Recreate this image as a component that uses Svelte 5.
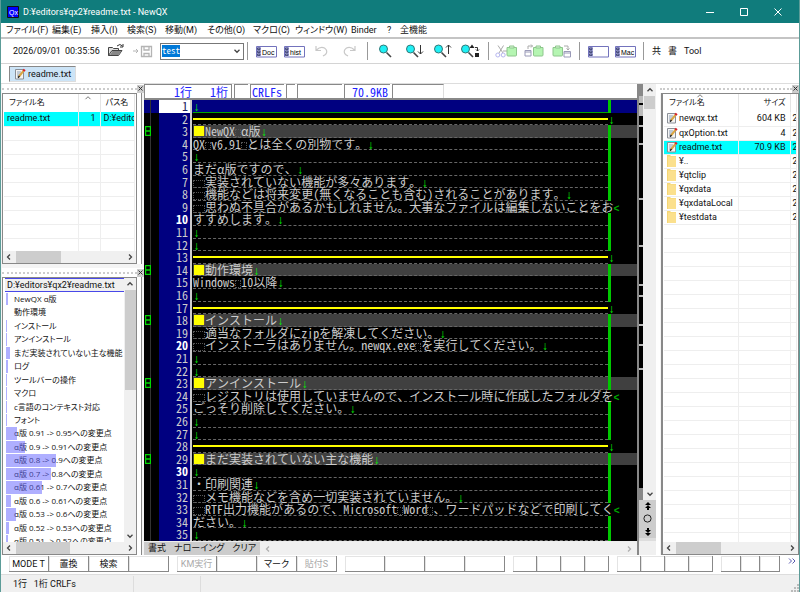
<script lang="ts">
  type Line = { text?: string; kind?: "cursor" | "rule" | "head"; wrap?: boolean };

  const menus = ["ファイル(F)", "編集(E)", "挿入(I)", "検索(S)", "移動(M)", "その他(O)", "マクロ(C)", "ウィンドウ(W)", "Binder", "?", "全機能"];

  const lines: Line[] = [
    { kind: "cursor" },
    { kind: "rule" },
    { kind: "head", text: "NewQX α版" },
    { text: "QX v6.91 とは全くの別物です。" },
    {},
    { text: "まだα版ですので、" },
    { text: "　実装されていない機能が多々あります。" },
    { text: "　機能などは将来変更(無くなることも含む)されることがあります。" },
    { text: "　思わぬ不具合があるかもしれません。大事なファイルは編集しないことをお", wrap: true },
    { text: "すすめします。" },
    {},
    {},
    { kind: "rule" },
    { kind: "head", text: "動作環境" },
    { text: "Windows 10以降" },
    {},
    { kind: "rule" },
    { kind: "head", text: "インストール" },
    { text: "　適当なフォルダにzipを解凍してください。" },
    { text: "　インストーラはありません。newqx.exe を実行してください。" },
    {},
    {},
    { kind: "head", text: "アンインストール" },
    { text: "　レジストリは使用していませんので、インストール時に作成したフォルダを", wrap: true },
    { text: "ごっそり削除してください。" },
    {},
    {},
    { kind: "rule" },
    { kind: "head", text: "まだ実装されていない主な機能" },
    {},
    { text: "・印刷関連" },
    { text: "　メモ機能などを含め一切実装されていません。" },
    { text: "　RTF出力機能があるので、Microsoft Word 、ワードパッドなどで印刷してく", wrap: true },
    { text: "ださい。" },
    {},
  ];

  // title, length bar in px
  const outline: [string, number][] = [
    ["NewQX α版", 2], ["動作環境", 0], ["インストール", 1], ["アンインストール", 1],
    ["まだ実装されていない主な機能", 4], ["ログ", 2], ["ツールバーの操作", 1], ["マクロ", 1],
    ["c言語のコンテキスト対応", 1], ["フォント", 1],
    ["α版 0.91 -> 0.95への変更点", 11], ["α版 0.9 -> 0.91への変更点", 19],
    ["α版 0.8 -> 0.9への変更点", 50], ["α版 0.7 -> 0.8への変更点", 45],
    ["α版 0.61 -> 0.7への変更点", 36], ["α版 0.6 -> 0.61への変更点", 5],
    ["α版 0.53 -> 0.6への変更点", 10], ["α版 0.52 -> 0.53への変更点", 3],
    ["α版 0.51 -> 0.52への変更点", 2],
  ];

  // distance from each overview mark to the one above
  const marks = [9, 16, 53, 45, 37, 9, 27, 18, 22];

  const files = [
    { name: "newqx.txt", size: "604 KB" },
    { name: "qxOption.txt", size: "4" },
    { name: "readme.txt", size: "70.9 KB", current: true },
    { name: "¥..", dir: true },
    { name: "¥qtclip", dir: true },
    { name: "¥qxdata", dir: true },
    { name: "¥qxdataLocal", dir: true },
    { name: "¥testdata", dir: true },
  ];

  const keys = [
    { size: "wide", labels: ["MODE T", "置換", "検索", ""] },
    { size: "wide", labels: ["KM実行", "", "マーク", "貼付S"] },
    { size: "wide", labels: ["", "", "", ""] },
    { size: "slim", labels: ["", "", "", ""] },
    { size: "slim", labels: ["", "", "", ""] },
    { size: "slim", labels: ["", "", ""] },
  ];
  const disabled = ["KM実行", "貼付S"];

  let search = $state("test");
</script>

{#snippet chevron(dir: string, dim = false)}
  <svg class="chev" class:dim viewBox="0 0 8 8" width="8" height="8">
    {#if dir === "left"}<path d="M5 1.5 2.5 4 5 6.5" />
    {:else if dir === "right"}<path d="M3 1.5 5.5 4 3 6.5" />
    {:else if dir === "up"}<path d="M1.5 5.2 4 2.7 6.5 5.2" />
    {:else}<path d="M1.5 2.8 4 5.3 6.5 2.8" />{/if}
  </svg>
{/snippet}

{#snippet hscroll(size: string)}
  <div class="hscroll">
    {@render chevron("left")}
    <div class="thumb {size}"></div>
    <span class="grow"></span>
    {@render chevron("right")}
  </div>
{/snippet}

{#snippet grip()}
  <div class="grip"><i></i><button aria-label="閉じる"><svg viewBox="0 0 7 7" width="7" height="7"><path d="M1.5 1.5 5.5 5.5M5.5 1.5 1.5 5.5" stroke="#333" fill="none" /></svg></button></div>
{/snippet}

{#snippet memo()}
  <svg class="memo" viewBox="0 0 12 12" width="12" height="12">
    <path d="M1.5 1.5h8v9.5h-8z" fill="#f4f4f4" stroke="#8a8f96" />
    <path d="M3 4h4M3 6h3M3 8h3" stroke="#8da0b8" />
    <path d="M5 8.5 9.7 2.7" stroke="#d9a441" stroke-width="2" />
    <path d="M4 9.7 5.5 8" stroke="#222" stroke-width="1.4" />
    <path d="M9.4 3.1 10.7 1.5" stroke="#d8202a" stroke-width="2.4" />
  </svg>
{/snippet}

{#snippet labelled(text: string)}
  <svg viewBox="0 0 21 13" width="21" height="13">
    <path d="M.5 1.5h20v10.5H.5z" fill="#fff" stroke="#7373bd" />
    <path d="M1 2h4v9.5H1z" fill="#aaaadf" />
    <path d="M1.5 3h2.5v1.5H1.5zM1.5 6h2.5v1.5H1.5zM1.5 9h2.5v1.5H1.5z" fill="none" stroke="#333a66" stroke-width=".8" />
    <text x="6" y="9.5" font-size="7">{text}</text>
  </svg>
{/snippet}

{#snippet lens(mark: string)}
  <svg viewBox="0 0 21 16" width="21" height="16">
    <path d="M8.5 9.5 13 14" stroke="#444" stroke-width="1.6" />
    <circle cx="5.5" cy="6" r="4" fill="#1ff0f5" stroke="#377" />
    {#if mark === "down"}<path d="M15.5 2v9M13 8.5l2.5 2.5L18 8.5" stroke="#333" fill="none" />
    {:else if mark === "up"}<path d="M15.5 11V2M13 4.5 15.5 2 18 4.5" stroke="#333" fill="none" />
    {:else if mark === "replace"}<path d="M9.5 5h5L12 1.5z" fill="#222" /><path d="M15 4.5h2.5v3.5M16 6.5 17.5 8 19 6.5" stroke="#333" fill="none" /><path d="M15 10h4v4h-4z" fill="#222" />{/if}
  </svg>
{/snippet}

{#snippet board(x: number)}
  <path d="M{x} 3.5h9.5v7.5q0 1-1 1h-7.5q-1 0-1-1z" fill="#b5f5b2" stroke="#8ec68d" />
  <path d="M{x + 2.5} 4v-2h4.5v2z" fill="#d9f7d7" stroke="#8ec68d" />
{/snippet}

<div class="window">
  <header class="title">
    <svg viewBox="0 0 12 12" width="12" height="12">
      <path d="M.5.5h11v11H.5z" fill="#00f" stroke="#111" />
      <text x="2" y="9" font-size="7" fill="#fff">Qx</text>
    </svg>
    <h1>D:¥editors¥qx2¥readme.txt - NewQX</h1>
    <button aria-label="最小化"><svg viewBox="0 0 10 10" width="10" height="10"><path d="M1 5.5h8" /></svg></button>
    <button aria-label="最大化"><svg viewBox="0 0 10 10" width="10" height="10"><path d="M1.5 1.5h7v7h-7z" /></svg></button>
    <button aria-label="閉じる"><svg viewBox="0 0 10 10" width="10" height="10"><path d="M1.5 1.5l7 7M8.5 1.5l-7 7" /></svg></button>
  </header>

  <nav class="menu">
    {#each menus as m}<button>{m}</button>{/each}
  </nav>

  <div class="toolbar">
    <span>2026/09/01</span>
    <span>00:35:56</span>
    <button aria-label="開く">
      <svg viewBox="0 0 18 16" width="18" height="16">
        <path d="M1.5 12.5v-8h4l1 1h5v2M1.5 12.5l3.5-5h10l-3.5 5z" fill="#ddd" stroke="#444" />
        <path d="M3 12l2.5-4h9L11.5 12z" fill="#888" />
        <path d="M10 3q3-3 5.5 0M16 1v3h-3" fill="none" stroke="#333" />
      </svg>
    </button>
    <button aria-label="保存">
      <svg viewBox="0 0 21 16" width="21" height="16" stroke="#b4b4b4" fill="none">
        <path d="M1 8h5M4 6l2 2-2 2" />
        <path d="M9.5 3.5h10v10h-10zM12 3.5v3.5h5V3.5M12 13.5v-3h5v3" stroke-width="1.3" />
      </svg>
    </button>
    <div class="combo">
      <input aria-label="検索文字列" bind:value={search} />
      <span class="grow"></span>
      <button aria-label="履歴">{@render chevron("down")}</button>
    </div>
    <i class="sep"></i>
    <button aria-label="文書">{@render labelled("Doc")}</button>
    <button aria-label="履歴一覧">{@render labelled("hist")}</button>
    <button aria-label="元に戻す"><svg viewBox="0 0 15 14" width="15" height="14" fill="none" stroke="#c8c8c8" stroke-width="1.2"><path d="M2 2v4.5h5M2.5 6q4-4 8-2 4 3 1 6.5L9 12" /></svg></button>
    <button aria-label="やり直し"><svg viewBox="0 0 15 14" width="15" height="14" fill="none" stroke="#c8c8c8" stroke-width="1.2"><path d="M13 2v4.5H8M12.5 6q-4-4-8-2-4 3-1 6.5L6 12" /></svg></button>
    <i class="sep"></i>
    <button aria-label="検索">{@render lens("")}</button>
    <button aria-label="次を検索">{@render lens("down")}</button>
    <button aria-label="前を検索">{@render lens("up")}</button>
    <button aria-label="置換">{@render lens("replace")}</button>
    <i class="sep"></i>
    <button aria-label="切り取り">
      <svg viewBox="0 0 22 15" width="22" height="15" fill="none">
        <path d="M3 1.5 8 9M8.5 1.5 4 9M8 7h4" stroke="#aaa" /><circle cx="2.8" cy="11" r="2" stroke="#b5b5ee" /><circle cx="8.2" cy="11" r="2" stroke="#b5b5ee" />
        {@render board(12)}
      </svg>
    </button>
    <button aria-label="コピー">
      <svg viewBox="0 0 20 15" width="20" height="15" fill="none">
        <path d="M4 5V2h4.5M7 .5 8.5 2 7 3.5" stroke="#aaa" /><path d="M1 6.5h6v5.5H1zM1 8h6" stroke="#9a9ab8" />
        {@render board(9.5)}
      </svg>
    </button>
    <button aria-label="貼り付け">
      <svg viewBox="0 0 20 15" width="20" height="15" fill="none">
        {@render board(1)}
        <path d="M12 2h4v4M14.5 4.5 16 6l1.5-1.5" stroke="#aaa" /><path d="M12 7.5h6.5v5.5H12zM12 9h6.5" stroke="#9a9ab8" fill="#fff" />
      </svg>
    </button>
    <i class="sep"></i>
    <button aria-label="パネル">{@render labelled("")}</button>
    <button aria-label="マクロ">{@render labelled("Mac")}</button>
    <i class="sep"></i>
    <button>共</button>
    <button>書</button>
    <button>Tool</button>
  </div>

  <div class="tabs"><button>{@render memo()}readme.txt</button></div>

  <main>
    <aside class="left">
      {@render grip()}
      <section class="pane open">
        <div class="sheet">
          <table>
            <colgroup><col class="c-name" /><col class="c-num" /><col /></colgroup>
            <thead><tr><th>ファイル名</th><th class="sorted">{@render chevron("up")}</th><th>パス名</th></tr></thead>
            <tbody>
              <tr class="cur"><td>readme.txt</td><td class="num">1</td><td>D:¥edito</td></tr>
              {#each Array(9) as _}<tr><td></td><td></td><td></td></tr>{/each}
            </tbody>
          </table>
        </div>
        {@render hscroll("mid")}
      </section>
      {@render grip()}
      <section class="pane tree">
        <div class="treebody">
          <div class="items">
            <h2>D:¥editors¥qx2¥readme.txt</h2>
            <ul>
              {#each outline as [name, len]}
                <li>{name}<i style="width: {len}px"></i></li>
              {/each}
            </ul>
          </div>
          <div class="vscroll">
            {@render chevron("up")}
            <div class="thumb long"></div>
            <span class="grow"></span>
            {@render chevron("down")}
          </div>
        </div>
        {@render hscroll("big")}
      </section>
    </aside>

    <section class="editor">
      <div class="work">
        <div class="info">
          <span class="pos">&nbsp;1行&nbsp;&nbsp;&nbsp;1桁</span><span class="s1"></span><span class="s2">CRLFs</span><span class="s3"></span><span class="s4"></span><span class="s5">70.9KB</span><span class="s6"></span>
        </div>
        <div class="text">
          {#each lines as line, i}
            <div class="line {line.kind ?? ''}" class:wrap={line.wrap}>
              <span class="fold">{#if line.kind === "head"}<svg viewBox="0 0 6 10" width="6" height="10"><path d="M.5.5h5v9h-5zM.5 5h5" fill="none" stroke="#00d800" stroke-width="1.4" /></svg>{/if}</span>
              <span class="no" class:ten={(i + 1) % 10 === 0}>{i + 1}</span>
              <span class="body">{#if line.kind === "head"}<b>■</b>{/if}{#each line.text ?? "" as ch}{#if ch === " " || ch === "　"}<i class="sp" class:full={ch === "　"}>{ch}</i>{:else}{ch}{/if}{/each}{#if line.wrap}<em class="fold-mark">&lt;</em>{:else if line.kind !== "rule"}<em>↓</em>{/if}</span>
              <span class="edge">{#if line.kind === "rule"}<em>↓</em>{/if}</span>
            </div>
          {/each}
        </div>
        <div class="modes">
          <button>書式</button><button>ナローイング</button><button>クリア</button>
          <div class="track">{@render chevron("left", true)}<span class="grow"></span>{@render chevron("right", true)}</div>
        </div>
      </div>
      <div class="side">
        <div class="bars">
          <div class="map">
            <i class="m0"></i><i class="m1"></i><i class="m2"></i>
            {#each marks as gap}<i style="margin-top: {gap}px"></i>{/each}
            <span class="grow"></span><i class="m0"></i>
          </div>
          <div class="vscroll">
            {@render chevron("up")}
            <div class="thumb short"></div>
            <span class="grow"></span>
            {@render chevron("down")}
          </div>
        </div>
        <div class="jump">
          <button aria-label="前へ"><svg viewBox="0 0 8 8" width="8" height="8"><path d="M4 0 7 3H1zM4 3 7 6H1zM3 6h2v2H3z" /></svg></button>
          <button aria-label="対象"><svg viewBox="0 0 9 9" width="9" height="9"><circle cx="4.5" cy="4.5" r="3.6" fill="none" stroke="#222" /></svg></button>
          <button aria-label="次へ"><svg viewBox="0 0 8 8" width="8" height="8"><path d="M4 8 7 5H1zM4 5 7 2H1zM3 0h2v2H3z" /></svg></button>
        </div>
        <div class="foot"></div>
      </div>
    </section>

    <aside class="right">
      {@render grip()}
      <section class="pane">
        <div class="sheet">
          <table>
            <colgroup><col class="f-name" /><col class="f-size" /><col /></colgroup>
            <thead><tr><th>ファイル名<span class="mark">{@render chevron("up")}</span></th><th class="num">サイズ</th><th></th></tr></thead>
            <tbody>
              {#each files as f}
                <tr class:cur={f.current}>
                  <td class="file">
                    {#if f.dir}<svg viewBox="0 0 12 12" width="12" height="12"><path d="M1 0h3l1 1h5v11H1z" fill="#f5d573" /><path d="M2 1.5h8V12H2z" fill="#fbe08d" /></svg>{:else}{@render memo()}{/if}<span>{f.name}</span>
                  </td>
                  <td class="num">{f.size ?? ""}</td>
                  <td class="date">2</td>
                </tr>
              {/each}
              {#each Array(24) as _}<tr><td></td><td></td><td></td></tr>{/each}
            </tbody>
          </table>
        </div>
        {@render hscroll("mid")}
      </section>
    </aside>
  </main>

  <div class="keys">
    {#each keys as group}
      <div class="group {group.size}">
        {#each group.labels as label}<button disabled={disabled.includes(label)}>{label}</button>{/each}
      </div>
    {/each}
    <button class="more" aria-label="その他"><svg viewBox="0 0 8 6" width="8" height="6"><path d="M1 .5 3.5 3 1 5.5M4.5 .5 7 3 4.5 5.5" fill="none" stroke="#5a5ab0" /></svg></button>
  </div>

  <footer>
    <span class="first">1行&nbsp;&nbsp;&nbsp;1桁 CRLFs</span><span class="second"></span><span class="grow"></span>
    <svg viewBox="0 0 8 8" width="8" height="8"><path d="M6 0h2v2H6zM3 3h2v2H3zM6 3h2v2H6zM0 6h2v2H0zM3 6h2v2H3zM6 6h2v2H6z" fill="#bbb" /></svg>
  </footer>
</div>

<style>
  :global(body) { background: #fff; }
  .window { box-sizing: border-box; height: 100vh; min-height: 400px; display: flex; flex-direction: column; overflow: hidden; border: solid #5c9c98; border-width: 0 1px; background: #fff; color: #111; font: 9px/14px Roboto, "Noto Sans CJK JP", sans-serif; font-feature-settings: "palt"; }
  .window *, .window *::before { box-sizing: border-box; }
  button { padding: 0; border: 0; background: none; color: inherit; font: inherit; font-feature-settings: inherit; white-space: nowrap; display: flex; align-items: center; }
  svg { display: block; flex: none; }
  svg text { font-family: "Liberation Sans", sans-serif; }
  .grow { flex: 1; }
  .chev { fill: none; stroke: #444; stroke-width: 1.3; }
  .chev.dim { stroke: #b0b0b0; }

  .title { flex: none; height: 23px; display: flex; align-items: center; padding: 0 4px 0 6px; background: #107c7c; color: #fff; }
  .title h1 { flex: 1; margin: 0 0 0 4px; font-size: 9px; font-weight: 400; }
  .title button { width: 34px; height: 22px; justify-content: center; }
  .title button path { fill: none; stroke: #fff; }

  .menu { flex: none; height: 16px; display: grid; grid-template-columns: 46px 39px 36px 38px 42px 46px 42px 56px 36px 13px 1fr; padding-left: 5px; border-bottom: 2px solid #c4c4c4; }
  .toolbar { flex: none; height: 25px; display: grid; grid-template-columns: 52px 42px 25px 28px 87px 9px 28px 30px 28px 25px 11px 27px 28px 27px 28px 7px 29px 28px 27px 9px 27px 28px 9px 16px 16px 1fr; align-items: center; padding-left: 12px; border-bottom: 1px solid #d4d4d4; }
  .sep { width: 1px; height: 18px; background: #999; }
  .combo { width: 84px; height: 17px; display: flex; align-items: center; padding: 0 2px 0 1px; border: 1px solid #777; }
  .combo input { width: 18px; height: 12px; padding: 0; border: 0; background: #0078d7; color: #fff; font: 9px/12px "Noto Sans Mono CJK JP", "Liberation Mono", monospace; }
  .tabs { flex: none; height: 20px; padding: 2px 8px; border-bottom: 1px solid #ddd; }
  .tabs button { height: 16px; padding: 0 4px; gap: 2px; border: 1px solid #888; border-color: #888 #ddd #ddd #888; background: #cce4f7; }

  main { flex: 1; min-height: 0; display: flex; }
  .left { width: 143px; flex: none; display: flex; flex-direction: column; padding-left: 1px; background: #f4f4f4; }
  .right { width: 139px; flex: none; display: flex; flex-direction: column; background: #f4f4f4; }
  .grip { flex: none; height: 9px; display: flex; align-items: center; background: #fff; }
  .grip i { flex: 1; border-top: 2px dotted #ccc; }
  .grip button { width: 7px; height: 8px; background: #ccc; }
  .pane { display: flex; flex-direction: column; border: 1px solid #888; background: #fff; min-height: 0; }
  .left .pane { margin-right: 7px; box-shadow: 4px 0 0 #fff, 5px 0 0 #888; }
  .right .pane { flex: 1; margin: 0 0 0 1px; border-left: 2px solid #888; }
  .pane.open { height: 171px; flex: none; margin-bottom: 4px; }
  .pane.tree { flex: 1; }
  .sheet { flex: 1; min-height: 0; overflow: hidden; padding: 0 1px; }
  table { width: 100%; table-layout: fixed; border-collapse: collapse; }
  .c-name { width: 74px; }
  .c-num { width: 22px; }
  .f-name { width: 74px; }
  .f-size { width: 52px; }
  th { position: relative; height: 18px; padding: 0 0 0 5px; text-align: left; font-weight: 400; font-size: 8px; border-right: 1px solid #e4e4e4; white-space: nowrap; }
  th.sorted { vertical-align: top; }
  .mark { position: absolute; left: 32px; top: -2px; }
  .mark .chev, .sorted .chev { stroke-width: 1; stroke: #777; }
  td { height: 14px; padding: 0 0 0 4px; line-height: 13px; border: solid #eee; border-width: 0 1px 1px 0; white-space: nowrap; overflow: hidden; }
  .open td { padding-left: 3px; }
  th.num, td.num { padding: 0 4px 0 0; text-align: right; }
  td.date { padding: 0 0 0 2px; }
  .cur td { background: #0ff; }
  td.file { padding: 0 0 0 2px; }
  .file svg { float: left; }
  .file span { margin-left: 1px; }
  .hscroll { flex: none; height: 12px; display: flex; align-items: center; gap: 3px; padding: 0 2px; background: #f0f0f0; }
  .thumb { background: #cdcdcd; }
  .mid { width: 45px; height: 12px; }
  .big { width: 54px; height: 12px; }
  .vscroll { width: 12px; flex: none; display: flex; flex-direction: column; align-items: center; gap: 2px; padding: 2px 0; background: #f0f0f0; }
  .long { width: 11px; height: 100px; }
  .short { width: 11px; height: 13px; }

  .treebody { flex: 1; min-height: 0; display: flex; }
  .items { flex: 1; min-width: 0; display: flex; flex-direction: column; overflow: hidden; padding: 0 0 0 2px; }
  h2 { flex: none; height: 14px; margin: 0; padding-left: 2px; border: solid #4848e8; border-width: 1px 0; background: #f0f0f0; font-size: 9px; line-height: 12px; font-weight: 400; }
  ul { flex: 1; min-height: 0; margin: 0; padding: 0; list-style: none; display: grid; grid-template-rows: repeat(18, 1fr) 8px; font-family: "Open Sans", "Noto Sans CJK JP", sans-serif; font-size: 8px; }
  li { position: relative; min-height: 0; padding-left: 9px; line-height: 13px; white-space: nowrap; }
  li i { position: absolute; left: 1px; top: 1px; bottom: 0; background: #6060ff80; }

  .editor { flex: 1; min-width: 0; display: flex; }
  .work { flex: 1; min-width: 0; display: flex; flex-direction: column; border-right: 2px solid #888; }
  .info { flex: none; height: 16px; display: flex; gap: 2px; border-left: 1px solid #888; border-bottom: 2px solid #888; color: #22f; font: 12px/13px "Noto Sans Mono CJK JP", "Noto Sans CJK JP", monospace; font-weight: 300; font-feature-settings: normal; }
  .info span { height: 14px; border: solid #888; border-width: 1px 0 0 1px; white-space: nowrap; }
  .info .pos { width: 87px; border-left: 0; border-right: 1px solid #888; text-align: right; padding-right: 3px; }
  .info .s1 { width: 14px; }
  .info .s2 { width: 34px; padding-left: 1px; }
  .info .s3 { width: 9px; }
  .info .s4 { width: 45px; }
  .info .s5 { width: 46px; text-align: right; padding-right: 2px; }
  .info .s6 { width: 52px; border-right: 1px solid #ddd; }
  .text { flex: 1; min-height: 0; display: grid; grid-template-columns: minmax(0, 1fr); grid-template-rows: repeat(35, minmax(0, 1fr)); overflow: hidden; background: #000; color: #ccc; font: 12px/12px "Noto Sans Mono CJK JP", "Noto Sans CJK JP", monospace; font-weight: 300; font-feature-settings: normal; }
  .line { min-height: 0; display: flex; white-space: nowrap; }
  .fold { width: 15px; flex: none; display: flex; align-items: center; background: linear-gradient(#333, #333) 6px 0 / 1px 100% no-repeat; padding-left: 1px; }
  .no { width: 33px; flex: none; padding-right: 2px; border-right: 2px solid #ccc; background: #000080; text-align: right; }
  .no.ten { color: #fff; font-weight: 700; }
  .body { flex: 1; min-width: 0; margin-left: 1px; border-bottom: 1px dashed #666; }
  .body b { display: inline-block; width: 12px; color: #ff0; font-weight: 400; background: linear-gradient(#ff0, #ff0) 1px 1px / 10px 10px no-repeat; }
  .edge { width: 29px; flex: none; border-left: 3px solid #00c800; }
  em { color: #00f000; font: 12px/12px "Liberation Mono", monospace; font-weight: 700; }
  em.fold-mark { color: #00a800; font-size: 10px; }
  .sp { display: inline-block; width: 6px; height: 8px; border: 1px dotted #555; line-height: 6px; overflow: hidden; vertical-align: -1px; }
  .sp.full { width: 12px; }
  .cursor { background: #000080; }
  .cursor .no { background: #fff; color: #202060; }
  .cursor .body { border-bottom: 1px solid #00a800; }
  .head .body, .head .edge { background-color: #404040; }
  .rule .body { background: linear-gradient(#ff0, #ff0) 0 5px / 100% 2px no-repeat; }
  .rule .edge, .wrap .edge { border-color: transparent; }
  .rule .edge { border-width: 0; }
  .modes { flex: none; height: 14px; display: flex; align-items: center; background: #ccc; border-top: 1px solid #eee; }
  .modes button { padding: 0 4px; line-height: 13px; }
  .track { flex: 1; height: 13px; display: flex; align-items: center; padding: 0 4px; background: #f0f0f0; }

  .side { width: 21px; flex: none; display: flex; flex-direction: column; padding: 0 4px 0 0; }
  .bars { flex: 1; min-height: 0; display: flex; }
  .map { width: 4px; background: #000; display: flex; flex-direction: column; }
  .map i { height: 2px; background: #bbb; }
  .map .m0 { height: 12px; background: #888; }
  .map .m1 { height: 7px; margin-bottom: 2px; }
  .map .m2 { height: 11px; }
  .bars .vscroll { width: 13px; padding: 2px 0; }
  .jump { height: 38px; flex: none; display: flex; flex-direction: column; align-items: center; justify-content: space-around; background: #ccc; }
  .foot { height: 17px; flex: none; border-top: 3px solid #ddd; background: #f0f0f0; }

  .keys { flex: none; height: 19px; display: flex; gap: 8px; padding: 1px 3px 2px 8px; background: #fff; overflow: hidden; }
  .group { display: flex; flex: none; }
  .group button { height: 16px; justify-content: center; border: solid #888; border-width: 0 1px 1px 0; box-shadow: inset 1px 1px 0 #e4e4e4; }
  .group button:disabled { color: #aaa; }
  .wide button { width: 40px; }
  .slim button { width: 24px; }
  .group:nth-child(6) { flex: 0 1 65px; overflow: hidden; }
  .more { align-self: flex-start; margin-left: auto; padding-top: 2px; }
  footer { flex: none; height: 18px; display: flex; align-items: center; border-top: 1px solid #ddd; background: #f0f0f0; }
  footer span { height: 16px; line-height: 16px; }
  .first { width: 133px; padding-left: 12px; border-right: 1px solid #ddd; }
  .second { width: 67px; border-right: 1px solid #ddd; }
  footer svg { align-self: flex-end; }
</style>
